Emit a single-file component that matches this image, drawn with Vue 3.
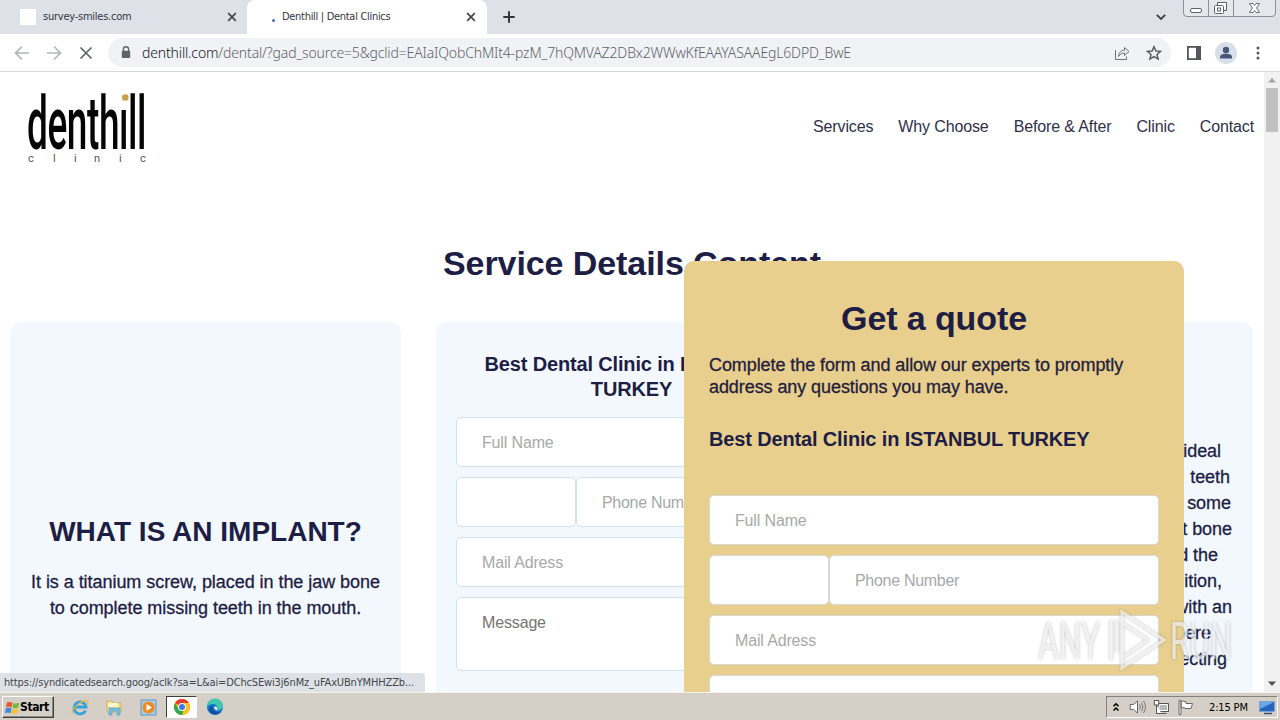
<script setup>
const nav = ['Services', 'Why Choose', 'Before & After', 'Clinic', 'Contact']
const url = '/dental/?gad_source=5&gclid=EAIaIQobChMIt4-pzM_7hQMVAZ2DBx2WWwKfEAAYASAAEgL6DPD_BwE'
const implantLines = [
  { text: 'ideal', inset: 32 },
  { text: 'teeth', inset: 23 },
  { text: 'some', inset: 22 },
  { text: 'bone', lead: 't', inset: 21 },
  { text: 'the', lead: 'd', inset: 35 },
  { text: 'condition,', inset: 31 },
  { text: 'with an', inset: 21 },
  { text: 'where', inset: 42 },
  { text: 'connecting', inset: 26 },
]
</script>

<template>
  <div class="screen">
    <div class="tabs">
      <div class="tab first">
        <span class="blank"></span>
        <span class="tab-title t1">survey-smiles.com</span>
        <svg class="x" viewBox="0 0 10 10"><path d="M1.2 1.2 8.8 8.8M8.8 1.2 1.2 8.8" /></svg>
      </div>
      <div class="tab active">
        <span class="spinner"></span>
        <span class="tab-title t2">Denthill | Dental Clinics</span>
        <svg class="x" viewBox="0 0 10 10"><path d="M1.2 1.2 8.8 8.8M8.8 1.2 1.2 8.8" /></svg>
      </div>
      <svg class="plus" viewBox="0 0 12 12"><path d="M6 .3V11.7M.3 6H11.7" /></svg>
      <svg class="chev" viewBox="0 0 10 6"><path d="M.8.8 5 5 9.2.8" /></svg>
      <svg class="winctl" viewBox="0 0 94 18">
        <path d="M.5 0V13Q.5 16.5 4 16.5H89Q92.500 16.500 92.500 13V0M25.500 0V16.500M50.500 0V16.500" fill="#e4e7ec" stroke="#8b9099" />
        <rect x="7.500" y="8.500" width="11" height="4" rx="1.500" fill="#fff" stroke="#5d626b" />
        <path d="M34.500 2.500H43.500V10.500H34.500Z" fill="#fff" stroke="#5d626b" />
        <rect x="31.500" y="5.500" width="9" height="8" rx="1" fill="#fff" stroke="#5d626b" />
        <rect x="34.500" y="8" width="3" height="3" fill="#fff" stroke="#5d626b" />
        <path d="M66.500 3.500H70L71.500 5.500 73 3.500H76.500L73.500 8 76.500 12.500H73L71.500 10.500 70 12.500H66.500L69.500 8Z" fill="#fff" stroke="#6b7079" />
      </svg>
    </div>

    <div class="toolbar">
      <svg class="ic back" viewBox="0 0 16 16"><path d="M15 8H2M8 1.500 1.500 8 8 14.500" /></svg>
      <svg class="ic fwd" viewBox="0 0 16 16"><path d="M1 8H14M8 1.500 14.500 8 8 14.500" /></svg>
      <svg class="ic stop" viewBox="0 0 14 14"><path d="M1.500 1.500 12.500 12.500M12.500 1.500 1.500 12.500" /></svg>
      <div class="omnibox">
        <svg class="lock" viewBox="0 0 10 13"><path d="M2.400 5V3.400a2.600 2.600 0 0 1 5.200 0V5" fill="none" stroke="#5f6368" stroke-width="1.400" /><rect x=".8" y="4.800" width="8.400" height="7.200" rx="1" fill="#5f6368" /></svg>
        <span class="url"><b>denthill.com</b>{{ url }}</span>
        <svg class="share" viewBox="0 0 16 16"><path d="M1.500 5V14.500H12.500V11.500M4.500 11.500C4.800 7.500 7 5.300 10.500 5.200V2.500L15 6.500 10.500 10.500V8C8 8 6 9 4.500 11.500Z" /></svg>
        <svg class="star" viewBox="0 0 16 16"><path d="M8 1.700 9.900 6 14.500 6.400 11 9.500 12.100 14 8 11.600 3.900 14 5 9.500 1.500 6.400 6.100 6Z" /></svg>
      </div>
      <svg class="panel" viewBox="0 0 14 14"><rect x=".9" y=".9" width="12.200" height="12.200" fill="#fff" stroke="#53575c" stroke-width="1.800" /><rect x="9" y="1" width="4.500" height="12" fill="#53575c" /></svg>
      <svg class="avatar" viewBox="0 0 22 22"><circle cx="11" cy="11" r="11" fill="#d9dfe8" /><circle cx="11" cy="8" r="3.200" fill="#4a5677" /><path d="M5 16.500V15C5 12.300 9 11.800 11 11.800S17 12.300 17 15V16.500Z" fill="#4a5677" /></svg>
      <svg class="dots" viewBox="0 0 4 14"><circle cx="2" cy="2" r="1.500" /><circle cx="2" cy="7" r="1.500" /><circle cx="2" cy="12" r="1.500" /></svg>
    </div>

    <div class="view">
      <main class="page">
        <header class="head">
          <svg class="logo" viewBox="0 0 130 84" width="130" height="84">
            <text class="word" transform="translate(3 64) scale(.5 1)" x="0" y="0" textLength="239" lengthAdjust="spacing">denthill</text>
            <rect x="97" y="6" width="8.500" height="18" fill="#fff" />
            <circle cx="101.300" cy="12.500" r="3.300" fill="#c9a04a" />
            <text class="sub" x="4 29 50 70 95 116" y="77">clinic</text>
          </svg>
          <nav class="nav"><a v-for="n in nav" :key="n">{{ n }}</a></nav>
        </header>
        <h1 class="title">Service Details Content</h1>
        <section class="cards">
          <article class="card implant">
            <h2>WHAT IS AN IMPLANT?</h2>
            <p>It is a titanium screw, placed in the jaw bone<br />to complete missing teeth in the mouth.</p>
          </article>
          <article class="card contact">
            <h3>Best Dental Clinic in ISTANBUL<br />TURKEY</h3>
            <div class="field">Full Name</div>
            <div class="pair"><div class="field code"></div><div class="field grow">Phone Number</div></div>
            <div class="field">Mail Adress</div>
            <div class="field area">Message</div>
          </article>
          <article class="card ideal">
            <p v-for="l in implantLines" :key="l.text" :style="{ paddingRight: l.inset + 'px' }">{{ l.lead }} {{ l.text }}</p>
          </article>
        </section>
      </main>

      <aside class="scroll">
        <svg viewBox="0 0 16 16"><path d="M4 10.500 8 6 12 10.500Z" fill="#a3a3a3" /></svg>
        <div class="thumb"></div>
        <svg class="down" viewBox="0 0 16 16"><path d="M4 5.500H12L8 10Z" fill="#505050" /></svg>
      </aside>

      <section class="quote">
        <h2>Get a quote</h2>
        <p>Complete the form and allow our experts to promptly<br />address any questions you may have.</p>
        <h3>Best Dental Clinic in ISTANBUL TURKEY</h3>
        <div class="field">Full Name</div>
        <div class="pair"><div class="field code"></div><div class="field grow">Phone Number</div></div>
        <div class="field">Mail Adress</div>
        <div class="field area"></div>
      </section>

      <div class="status">https://syndicatedsearch.goog/aclk?sa=L&amp;ai=DChcSEwi3j6nMz_uFAxUBnYMHHZZb...</div>

      <svg class="mark" viewBox="0 0 204 68" width="204" height="68">
        <g class="brand">
          <text x="4" y="53" textLength="62" lengthAdjust="spacingAndGlyphs">ANY</text>
          <text x="136" y="53" textLength="62" lengthAdjust="spacingAndGlyphs">RUN</text>
          <path d="M77 14V54M83 14V46" />
          <path d="M88 6 130 34 88 62V52L114 34 88 17ZM88 17V52" />
        </g>
      </svg>
    </div>

    <footer class="taskbar">
      <div class="start">
        <svg viewBox="0 0 16 16"><path d="M2 3Q5 1.500 8 3L7 8Q4 6.500 1 8Z" fill="#e65a2c" /><path d="M9 3.200Q12 4.500 15 3L14 8Q11 9.500 8 8.200Z" fill="#74b83e" /><path d="M.9 9Q4 7.500 7 9L6 14Q3 12.500 0 14Z" fill="#3e86dc" /><path d="M8 9.200Q11 10.500 14 9L13 14Q10 15.500 7 14.200Z" fill="#f5c232" /></svg>
        <b>Start</b>
      </div>
      <svg class="app" viewBox="0 0 18 18"><path d="M14.500 12.500A6 6 0 1 1 15 9H5" fill="none" stroke="#36a0df" stroke-width="2.800" /><path d="M1.500 15.500C-.5 11 12 .5 16.500 3 17.500 3.800 16.500 6 15.500 7" fill="none" stroke="#e8b93c" stroke-width="1.300" /></svg>
      <svg class="app" viewBox="0 0 18 18"><path d="M2 3H7L8 5H16V14H2Z" fill="#f4dc88" stroke="#c9a852" stroke-width=".7" /><path d="M3 5H13V9H3Z" fill="#fff5c7" /><path d="M4 17V10H15V17H12V13H7V17Z" fill="#75bfe4" stroke="#4a9ac7" stroke-width=".6" /></svg>
      <svg class="app" viewBox="0 0 18 18"><path d="M2 2H17V17H2Z" fill="#a8cce6" stroke="#5e98c3" /><circle cx="9.500" cy="9.500" r="6" fill="#f08a1c" /><path d="M7.500 6 13 9.500 7.500 13Z" fill="#fff" /></svg>
      <div class="running">
        <svg viewBox="0 0 16 16"><circle cx="8" cy="8" r="8" fill="#fbc116" /><path d="M8 8 1.070 4A8 8 0 0 1 14.930 4Z" fill="#e33b2e" /><path d="M8 8V4H14.930A8 8 0 0 1 8 16Z" fill="#fbc116" /><path d="M1.070 4 4.600 10 8 12 9.500 11.500 8 16A8 8 0 0 1 1.070 4Z" fill="#2da94f" /><circle cx="8" cy="8" r="3.900" fill="#fff" /><circle cx="8" cy="8" r="3" fill="#3978e6" /></svg>
      </div>
      <svg class="app edge" viewBox="0 0 18 18"><circle cx="9" cy="9" r="8" fill="#1673c8" /><path d="M1 9A8 8 0 0 1 17 8C17 12 11.500 12.500 11 10.500 12 8 9.500 6 7 6 4 6 1.500 7.500 1 9Z" fill="#3fc7b0" /><path d="M7.500 8C5 11 8 15.500 14.500 13.500 11 18.500 3 16.500 3 11 3 9 5 7.500 7.500 8Z" fill="#0f4f9e" /><path d="M8.500 8.500C7.300 11 10 13.500 16 11.500 14 12.500 11 12.300 11 10.500 11.500 9.300 10.500 8 8.500 8.500Z" fill="#e8eff2" /></svg>
      <div class="tray">
        <svg class="up" viewBox="0 0 8 10"><path d="M1.500 4.300 4 1.800 6.500 4.300M1.500 8.500 4 6 6.500 8.500" fill="none" stroke="#000" stroke-width="1.500" /></svg>
        <svg class="tr" viewBox="0 0 16 16"><path d="M.7 5.500H4L8 2V14L4 10.500H.7Z" fill="#fff" stroke="#666" /><path d="M10 5.500Q11.800 8 10 10.500M12 3.800Q15 8 12 12.200M14 2Q18 8 14 14" fill="none" stroke="#777" /></svg>
        <svg class="tr" viewBox="0 0 16 16"><path d="M4.500 4.500H15V12.500H4.500ZM7 14.500H13" fill="#9a9a9a" stroke="#555" /><path d="M5.500 5.500H14V11.500H5.500Z" fill="#b9b9b9" stroke="#fff" /><path d="M.8 1.500H5.200V6H.8ZM3 6V14.500H8" fill="#fff" stroke="#555" /></svg>
        <svg class="tr" viewBox="0 0 16 16"><path d="M1.500 1.500H3.500V15.500H1.500ZM3.500 2.500Q6 1.500 8.500 3V4.500H15L13.500 9.500H8.500Q6 8 3.500 9Z" fill="#fff" stroke="#666" /></svg>
        <span class="clock">2:15 PM</span>
        <svg class="mon" viewBox="0 0 16 15"><path d="M.5 1.500H15.500V11.500H.5Z" fill="#2467bd" stroke="#7fa1c9" /><path d="M1 2H15L1 9Z" fill="#68a8e8" /><path d="M5 13.500H13" stroke="#314d78" stroke-width="1.500" /></svg>
      </div>
    </footer>
  </div>
</template>

<style>
body { margin: 0; overflow: hidden; }
</style>

<style scoped>
* { box-sizing: border-box; }
h1, h2, h3, p { margin: 0; }
.screen { width: 1280px; height: 720px; display: flex; flex-direction: column; overflow: hidden; background: #fff; font-family: "Liberation Sans", Arial, sans-serif; color: #1e1e44; white-space: nowrap; }
svg { display: block; flex: none; }

.tabs { height: 34px; flex: none; display: flex; align-items: flex-start; background: #dee1e8; font: 11px/34px "DejaVu Sans Condensed", "DejaVu Sans", sans-serif; color: #33363b; }
.tab { display: flex; align-items: center; height: 34px; }
.first { width: 247px; padding-left: 20px; }
.active { width: 240px; padding-left: 25px; background: #fff; border-radius: 8px 8px 0 0; }
.blank { width: 16px; height: 16px; background: #fff; margin-right: 7px; }
.spinner { width: 3px; height: 3px; border-radius: 50%; background: #4c68b8; margin: 6px 7px 0 0; }
.t1 { width: 184px; letter-spacing: -0.24px; }
.t2 { width: 184px; letter-spacing: -0.3px; }
.x { width: 10px; height: 10px; stroke: #43474c; stroke-width: 1.7; fill: none; }
.plus { width: 12px; height: 12px; margin: 11px 0 0 16px; stroke: #33373c; stroke-width: 2; }
.chev { width: 10px; height: 6px; margin: 14px 0 0 641px; fill: none; stroke: #3c4046; stroke-width: 1.8; }
.winctl { width: 94px; height: 18px; margin-left: 17px; }

.toolbar { height: 38px; flex: none; display: flex; align-items: center; border-bottom: 1px solid #d5d7da; padding-left: 14px; }
.ic { fill: none; stroke-width: 1.7; }
.back, .fwd { width: 16px; height: 16px; stroke: #b4b6b9; }
.fwd { margin-left: 16px; }
.stop { width: 14px; height: 14px; margin-left: 17px; stroke: #5f6368; }
.omnibox { width: 1063px; height: 29px; margin-left: 15px; border-radius: 15px; background: #f0f2f5; display: flex; align-items: center; padding-left: 13px; }
.lock { width: 10px; height: 13px; }
.url { width: 972px; margin-left: 11px; font: 300 14px/28px "Noto Sans", sans-serif; color: #5f6368; letter-spacing: -0.155px; }
.url b { font-weight: 300; color: #17181a; }
.share { width: 16px; height: 16px; fill: none; stroke: #6f7378; }
.star { width: 16px; height: 16px; margin-left: 16px; fill: none; stroke: #53575c; stroke-width: 1.4; }
.panel { width: 14px; height: 14px; margin-left: 16px; }
.avatar { width: 22px; height: 22px; margin-left: 14px; }
.dots { width: 4px; height: 14px; margin-left: 19px; fill: #55595e; }

.view { height: 620px; flex: none; position: relative; display: flex; overflow: hidden; }
.page { width: 1264px; height: 620px; overflow: hidden; }
.head { height: 110px; display: flex; justify-content: space-between; padding: 13px 10px 0 24px; }
.word { font: 500 74px Roboto, sans-serif; fill: #050505; }
.sub { font: 11px Roboto, sans-serif; fill: #555; }
.nav { display: flex; gap: 25px; height: 84px; line-height: 84px; font-size: 16px; letter-spacing: -0.13px; color: #30304a; }
.title { margin-top: 59px; text-align: center; font-size: 34px; line-height: 44px; letter-spacing: -0.08px; }
.cards { display: flex; gap: 35px; margin-top: 37px; padding-left: 10px; }
.card { width: 391px; height: 500px; flex: none; border-radius: 10px; background: #f3f8fe; padding: 0 20px; }
.implant { text-align: center; padding-top: 188px; }
.implant h2 { font-size: 28px; line-height: 44px; }
.implant p { font-size: 18px; line-height: 26px; margin: 15px -10px 0; }
.implant p, .ideal p, .quote p { letter-spacing: -0.05px; -webkit-text-stroke: 0.3px currentColor; }
.contact { padding-top: 30px; }
.card h3 { text-align: center; font-size: 20px; line-height: 25px; letter-spacing: -0.15px; margin-bottom: 15px; }
.field { height: 50px; border: 1px solid #cfe1f3; border-radius: 5px; background: #fff; padding-left: 25px; font-size: 16px; line-height: 49px; color: #a8a8a8; margin-bottom: 10px; overflow: hidden; letter-spacing: -0.15px; }
.pair { display: flex; }
.code { width: 120px; }
.grow { flex: 1; letter-spacing: -0.3px; }
.card .area { height: 74px; color: #757575; }
.ideal { padding: 116px 0 0; }
.ideal p { text-align: right; font-size: 18px; line-height: 26px; }

.scroll { width: 16px; background: #f1f1f1; display: flex; flex-direction: column; align-items: center; }
.scroll svg { width: 16px; height: 16px; }
.thumb { width: 12px; height: 44px; background: #c1c1c1; }
.scroll .down { margin-top: auto; }

.quote { position: absolute; left: 684px; top: 189px; width: 500px; height: 500px; border-radius: 10px; background: #e8cf8e; padding: 35px 25px 0; }
.quote h2 { text-align: center; font-size: 34px; line-height: 44px; letter-spacing: -0.1px; }
.quote p { font-size: 18px; line-height: 22px; margin-top: 14px; color: #24203c; letter-spacing: -0.08px; }
.quote h3 { font-size: 20px; line-height: 25px; letter-spacing: -0.15px; margin: 29px 0 43px; }
.quote .field { border-color: #d5dbd4; }
.status { position: absolute; left: 0; bottom: 0; width: 425px; height: 19px; border-radius: 0 4px 0 0; background: #dee1e6; padding-left: 4px; font: 11px/20px "DejaVu Sans Condensed", "DejaVu Sans", sans-serif; color: #44474c; letter-spacing: -0.15px; }
.mark { position: absolute; left: 1034px; top: 534px; filter: drop-shadow(0 0 1.5px rgba(90, 90, 100, .55)); }
.brand { opacity: .68; }
.brand text { font: 51px Roboto, sans-serif; fill: #fff; }
.brand path { fill: none; stroke: #fff; stroke-width: 3; }

.taskbar { height: 28px; flex: none; display: flex; align-items: center; background: #d5cfc7; border-top: 1px solid #f6f4f0; padding: 1px 2px 0 2px; font: 11px "DejaVu Sans Condensed", "DejaVu Sans", sans-serif; color: #000; }
.start { width: 52px; height: 22px; display: flex; align-items: center; padding-left: 2px; border: 1px solid; border-color: #fff #404040 #404040 #fff; box-shadow: inset -1px -1px 0 #8d8880; }
.start svg { width: 15px; height: 15px; }
.start b { margin-left: 0; font-size: 12px; letter-spacing: -0.4px; }
.app { width: 18px; height: 18px; margin-left: 16px; }
.start + .app { margin-left: 17px; }
.running { width: 31px; height: 22px; margin-left: 9px; background: #fff; border: 1px solid; border-color: #404040 #fff #fff #404040; display: flex; align-items: center; justify-content: center; }
.running svg { width: 16px; height: 16px; }
.edge { margin-left: 9px; }
.tray { width: 172px; height: 22px; margin-left: auto; display: flex; align-items: center; padding-left: 5px; border: 1px solid; border-color: #86817a #fff #fff #86817a; }
.up { width: 8px; height: 10px; }
.tr { width: 17px; height: 16px; margin-left: 9px; }
.tr + .tr { margin-left: 7px; }
.clock { width: 42px; margin-left: 15px; letter-spacing: -0.15px; }
.mon { width: 16px; height: 15px; margin-left: 8px; }
</style>
